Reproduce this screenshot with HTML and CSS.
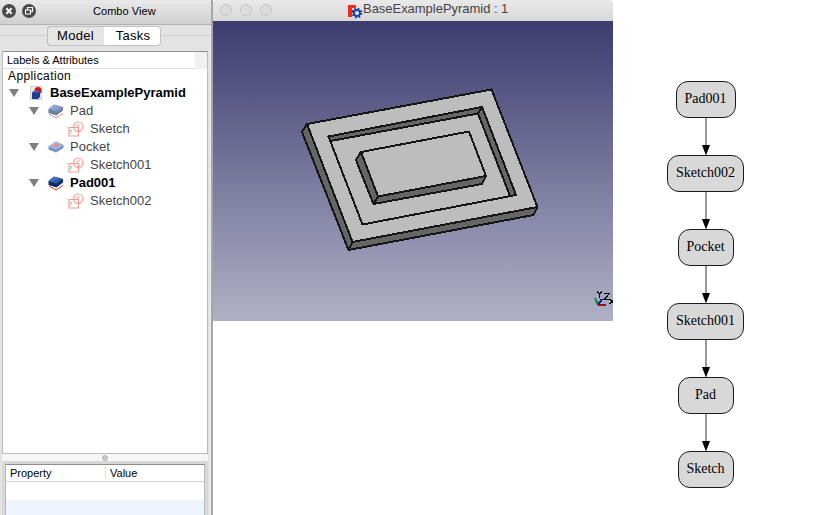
FILE: index.html
```html
<!DOCTYPE html>
<html lang="en">
<head>
<meta charset="utf-8">
<title>BaseExamplePyramid</title>
<link rel="stylesheet" href="styles.css">
</head>
<body>
<svg class="defs" width="0" height="0">
  <defs>
    <linearGradient id="blue" x1="0" y1="0" x2="1" y2="1"><stop offset="0" stop-color="#7fa6e8"/><stop offset=".5" stop-color="#2c5fae"/><stop offset="1" stop-color="#173f86"/></linearGradient>
    <symbol id="pad" viewBox="0 0 16 16">
      <path d="M1 11 8 15 15 10.500" fill="none" stroke="#d43a28" stroke-width="1"/>
      <path d="M.5 6 6 1.500 15 4 15 7.500 8.500 12.500 .5 10z" fill="#0d2b60"/>
      <path d="M1 6 6.500 2 14.500 4.300 8.500 9z" fill="url(#blue)"/>
    </symbol>
    <symbol id="pocket" viewBox="0 0 16 16">
      <path d="M.5 7.500 8 2.500 15.500 6 15.500 9 8 13.500 .5 10.500z" fill="#174d9b"/>
      <path d="M.5 7.500 8 2.500 15.500 6 8 10.700z" fill="#4f91df"/>
      <path d="M4.500 7 8 4 12 6 8 9z" fill="#e83c48"/>
    </symbol>
    <symbol id="sketch" viewBox="0 0 16 16">
      <g fill="none" stroke="#f99a8f" stroke-width="1.200"><path d="M1 6.500H10.500V15H1z"/><circle cx="10.300" cy="5.700" r="4.700"/></g>
      <path d="M3 9v4M2 10l1-1 1 1M9 4h3M9 4v2" fill="none" stroke="#aaa" stroke-width=".8"/>
    </symbol>
  </defs>
</svg>
<div class="app">
  <aside class="panel">
    <header class="panel-head">
      <svg width="40" height="22" viewBox="0 0 40 22">
        <circle cx="9" cy="11" r="7" fill="#4b4b4b"/><path d="m6.300 8.300 5.400 5.400m0-5.400-5.400 5.400" stroke="#fff" stroke-width="2"/>
        <circle cx="29" cy="11" r="7" fill="#4b4b4b"/><path d="M25.500 10h5v4h-5zM27.500 9.500V7.500h5v4H31" fill="none" stroke="#fff" stroke-width="1.100"/>
      </svg>
      <span class="panel-title">Combo View</span>
    </header>
    <div class="tabs"><span class="tab">Model</span><span class="tab active">Tasks</span></div>
    <section class="tree">
      <div class="tree-head"><span>Labels &amp; Attributes</span></div>
      <div class="app-row">Application</div>
      <div class="row l0"><i class="tri"></i><svg width="14" height="14" viewBox="0 0 14 14"><path d="M.5.5h11v13H.5z" fill="#eee" stroke="#ccc"/><circle cx="8" cy="4.500" r="3.500" fill="#d2161e"/><path d="m2 6.500 2-1.500h6v6l-2 2H2z" fill="#203a9a"/><path d="m2 6.500 2-1.500h6L8 6.500z" fill="#4c69d0"/></svg><b>BaseExamplePyramid</b></div>
      <div class="row l1"><i class="tri"></i><svg class="dim" width="16" height="16"><use href="#pad"/></svg><span>Pad</span></div>
      <div class="row l2"><svg width="16" height="16"><use href="#sketch"/></svg><span>Sketch</span></div>
      <div class="row l1"><i class="tri"></i><svg class="dim" width="16" height="16"><use href="#pocket"/></svg><span>Pocket</span></div>
      <div class="row l2"><svg width="16" height="16"><use href="#sketch"/></svg><span>Sketch001</span></div>
      <div class="row l1"><i class="tri"></i><svg width="16" height="16"><use href="#pad"/></svg><b>Pad001</b></div>
      <div class="row l2"><svg width="16" height="16"><use href="#sketch"/></svg><span>Sketch002</span></div>
    </section>
    <div class="splitter"><i></i></div>
    <section class="props">
      <div class="table">
        <div class="cols"><span class="property">Property</span><span class="value">Value</span></div>
        <div class="blank"></div><div class="stripe"></div>
      </div>
    </section>
  </aside>
  <main class="window">
    <header class="titlebar">
      <div class="lights"><i></i><i></i><i></i></div>
      <svg class="logo" width="15" height="15" viewBox="0 0 15 15"><path d="M0 1h8v3H4v2h3v3H4v4H0z" fill="#f52a16"/><circle cx="9" cy="9" r="3" fill="#e8e8e8" stroke="#1645a8" stroke-width="1.900"/><circle cx="9" cy="9" r="4.500" fill="none" stroke="#1645a8" stroke-width="1.800" stroke-dasharray="1.770"/></svg>
      <span class="doc">BaseExamplePyramid : 1</span>
    </header>
    <svg class="view" width="400" height="300" viewBox="213 21 400 300">
      <g stroke="#151515" stroke-width="2" stroke-linejoin="round" shape-rendering="crispEdges">
        <path fill="#666" d="M307 124 302 132 348.500 250 352.500 242z"/>
        <path fill="#666" d="M352.500 242 348.500 250 533.500 215 537.500 207z"/>
        <path fill="#bdbdbd" d="M307 124 491.500 89.500 537.500 207 352.500 242z"/>
        <path fill="#bdbdbd" d="M328.500 136.500 482 107 516 195 362.500 224.500z"/>
        <path fill="#666" d="M328.500 136.500 482 107 478 113.500 330.500 141z"/>
        <path fill="#666" d="M482 107 516 195 510 196 478 113.500z"/>
        <path fill="#666" d="M361 152 356 160 373.500 204 378 196.500z"/>
        <path fill="#666" d="M378 196.500 373.500 204 482 184 486 176z"/>
        <path fill="#bdbdbd" d="M361 152 469 131.500 486 176 378 196.500z"/>
      </g>
      <g fill="none" shape-rendering="crispEdges">
        <path d="m598 305-3-7" stroke="#16901e" stroke-width="2"/><path d="m598 305 4-6" stroke="#17249b" stroke-width="2"/><path d="M598 305h8" stroke="#8c1717" stroke-width="2"/>
        <path d="m597 291 2.500 3.500 2.500-3.500M599.500 294v4M604 293.500h5.500l-5.500 6h6M609.500 299l5 5m0-5-5 5" stroke="#050505" stroke-width="1.200"/>
      </g>
    </svg>
  </main>
  <section class="graph">
    <div class="node pad1">Pad001</div><svg class="edge" width="12" height="37"><path d="M6 0v28"/><path class="head" d="M2 27h8L6 37.500z"/></svg>
    <div class="node wide">Sketch002</div><svg class="edge" width="12" height="37"><path d="M6 0v28"/><path class="head" d="M2 27h8L6 37.500z"/></svg>
    <div class="node">Pocket</div><svg class="edge" width="12" height="37"><path d="M6 0v28"/><path class="head" d="M2 27h8L6 37.500z"/></svg>
    <div class="node wide">Sketch001</div><svg class="edge" width="12" height="37"><path d="M6 0v28"/><path class="head" d="M2 27h8L6 37.500z"/></svg>
    <div class="node">Pad</div><svg class="edge" width="12" height="37"><path d="M6 0v28"/><path class="head" d="M2 27h8L6 37.500z"/></svg>
    <div class="node">Sketch</div>
  </section>
</div>
</body>
</html>
```
FILE: styles.css
```css
* { box-sizing: border-box; }
body { margin: 0; background: #fff; font-family: "Liberation Sans", sans-serif; color: #000; overflow: hidden; }
svg { display: block; flex: none; }
.defs { position: absolute; }
.app { display: flex; width: 813px; height: 515px; }
.panel { width: 213px; height: 515px; display: flex; flex-direction: column; background: #e3e3e3; border-right: 2px solid #a5a5a5; box-shadow: inset -1px 0 #ededed; }
.panel-head { height: 25px; display: flex; border-bottom: 1px solid #b2b2b2; background: linear-gradient(#e9e9e9, #d0d0d0); }
.panel-title { margin-left: 53px; font-size: 11px; line-height: 23px; letter-spacing: .05px; }
.tabs { height: 26px; display: flex; justify-content: center; padding: 1px 4px 0 0; background: linear-gradient(#d2d2d2, #d2d2d2) 0 10px / 100% 1px no-repeat; }
.tab { width: 57px; height: 20px; border: 1px solid #bdbdbd; border-right: 0; border-radius: 4px 0 0 4px; background: #e5e5e5; text-align: center; font-size: 13px; line-height: 18px; letter-spacing: .3px; }
.tab.active { padding-left: 3px; background: #fff; border: 1px solid #c2c2c2; border-left: 0; border-radius: 0 4px 4px 0; }
.tree { width: 206px; height: 403px; margin-left: 2px; background: #fff; border: 1px solid #bcbcbc; border-top-color: #929292; }
.tree-head { height: 17px; background: #f0f0f0; }
.tree-head span { display: block; width: 192px; height: 17px; padding-left: 4px; background: #fff; border-bottom: 1px solid #ddd; font-size: 11px; line-height: 17px; }
.app-row { height: 15px; padding-left: 5px; font-size: 12px; line-height: 15px; letter-spacing: .4px; }
.row { height: 18px; display: flex; align-items: center; font-size: 13px; color: #444; }
.row span, .row b { padding-bottom: 2px; }
.row b { color: #000; }
.l0 { padding-left: 6px; }
.l1 { padding-left: 26px; }
.l2 { padding-left: 65px; }
.tri { border: 5px solid transparent; border-top: 8px solid #7d7d7d; border-bottom: 0; }
.l0 svg { margin: 0 6px 0 11px; }
.l1 svg { margin: 0 6px 0 9px; }
.l2 svg { margin-right: 6px; }
.dim { opacity: .6; }
.splitter { height: 7px; width: 206px; margin-left: 2px; background: #f6f6f6; display: flex; justify-content: center; align-items: center; }
.splitter i { width: 6px; height: 6px; border-radius: 50%; background: #c9c9c9; border: 1px solid #b8b8b8; }
.props { height: 54px; width: 206px; margin-left: 2px; padding: 3px 3px 0; background: #d8d8d8; border-radius: 3px 3px 0 0; }
.table { height: 51px; background: #fff; border: 1px solid #b8b8b8; border-top-color: #8d8d8d; border-bottom: 0; }
.cols { height: 17px; display: flex; align-items: center; border-bottom: 1px solid #d0d0d0; font-size: 11px; }
.property { width: 100px; padding-left: 4px; border-right: 1px solid #ddd; }
.value { padding-left: 4px; }
.blank { height: 18px; }
.stripe { height: 15px; background: #edf4ff; }
.window { width: 400px; height: 321px; }
.titlebar { height: 21px; display: flex; border-radius: 4px 4px 0 0; background: linear-gradient(#e9e9e9, #d8d8d8); }
.lights { display: flex; gap: 8px; padding: 4px 0 0 7px; }
.lights i { width: 12px; height: 12px; border: 1px solid #c7c7c7; border-radius: 50%; background: #dcdcdc; }
.logo { margin: 4px 0 0 76px; }
.doc { font-size: 13px; line-height: 18px; color: #444; white-space: nowrap; letter-spacing: -.03px; }
.view { background: linear-gradient(#3c3c70, #b0b0c6); }
.graph { width: 185px; display: flex; flex-direction: column; align-items: center; padding-top: 81px; }
.edge path { stroke: #333; }
.edge .head { stroke: none; fill: #000; }
.node { flex: none; width: 56px; height: 37px; border: 1px solid #1b1b1b; border-radius: 12px; background: #d8d8d8; font: 14px/34px "Liberation Serif", serif; text-align: center; white-space: nowrap; }
.node.wide { width: 77px; }
.node.pad1 { width: 60px; }
```
